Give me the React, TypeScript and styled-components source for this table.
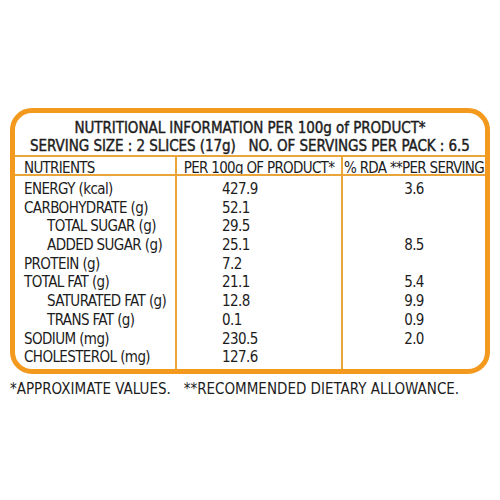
import React from "react";
import styled, { createGlobalStyle } from "styled-components";

const ORANGE = "#F39A1E";
const LINE = "#E9A43A";
const INK = "#1c1c1c";

const Global = createGlobalStyle`
  html, body { margin: 0; padding: 0; background: #fff; }
  body {
    font-family: "DejaVu Sans Condensed", "DejaVu Sans", sans-serif;
    font-stretch: condensed;
    color: ${INK};
  }
`;

const Page = styled.div`
  width: 500px;
  height: 500px;
  box-sizing: border-box;
  padding: 108px 10px 0 10px;
`;

const Panel = styled.div`
  width: 480px;
  height: 266px;
  box-sizing: border-box;
  border: 5px solid ${ORANGE};
  border-radius: 22px;
  overflow: hidden;
  display: flex;
  flex-direction: column;
`;

const Title = styled.div`
  text-align: center;
  font-size: 15px;
  font-weight: 400;
  -webkit-text-stroke: 0.4px ${INK};
  line-height: 18px;
  letter-spacing: -0.05px;
  padding-top: 6px;
  height: 42px;
  box-sizing: border-box;
  white-space: nowrap;
`;

const Table = styled.div`
  flex: 1;
  display: grid;
  grid-template-columns: 160px 166px 1fr;
  grid-template-rows: 19px 1fr;
  border-top: 2px solid ${LINE};
`;

const Col = styled.div<{ $divider?: boolean; $align: "left" | "value" | "center" }>`
  display: flex;
  flex-direction: column;
  border-left: ${(p) => (p.$divider ? `2px solid ${LINE}` : "none")};
  padding-top: 4px;
  align-items: ${(p) => (p.$align === "center" ? "center" : "flex-start")};
  padding-left: ${(p) => (p.$align === "value" ? "45px" : p.$align === "left" ? "9px" : "0")};
`;

const Head = styled.div<{ $divider?: boolean; $center?: boolean }>`
  border-left: ${(p) => (p.$divider ? `2px solid ${LINE}` : "none")};
  border-bottom: 2px solid ${LINE};
  font-size: 15px;
  line-height: 18px;
  padding-top: 2px;
  box-sizing: border-box;
  letter-spacing: -0.7px;
  white-space: nowrap;
  overflow: hidden;
  text-align: ${(p) => (p.$center ? "center" : "left")};
  padding-left: ${(p) => (p.$center ? "0" : "9px")};
`;

const Cell = styled.div<{ $indent?: boolean }>`
  font-size: 15px;
  line-height: 18.7px;
  height: 18.7px;
  letter-spacing: -0.6px;
  white-space: nowrap;
  padding-left: ${(p) => (p.$indent ? "23px" : "0")};
`;

const Footer = styled.div`
  font-size: 15px;
  letter-spacing: 0px;
  padding: 6px 0 0 0;
  white-space: pre;
`;

type Row = { name: string; indent?: boolean; per100: string; rda: string };

const rows: Row[] = [
  { name: "ENERGY (kcal)", per100: "427.9", rda: "3.6" },
  { name: "CARBOHYDRATE (g)", per100: "52.1", rda: "" },
  { name: "TOTAL SUGAR (g)", indent: true, per100: "29.5", rda: "" },
  { name: "ADDED SUGAR (g)", indent: true, per100: "25.1", rda: "8.5" },
  { name: "PROTEIN (g)", per100: "7.2", rda: "" },
  { name: "TOTAL FAT (g)", per100: "21.1", rda: "5.4" },
  { name: "SATURATED FAT (g)", indent: true, per100: "12.8", rda: "9.9" },
  { name: "TRANS FAT (g)", indent: true, per100: "0.1", rda: "0.9" },
  { name: "SODIUM (mg)", per100: "230.5", rda: "2.0" },
  { name: "CHOLESTEROL (mg)", per100: "127.6", rda: "" },
];

export default function App() {
  return (
    <>
      <Global />
      <Page>
        <Panel>
          <Title>
            <div>NUTRITIONAL INFORMATION PER 100g of PRODUCT*</div>
            <div>SERVING SIZE : 2 SLICES (17g)&nbsp;&nbsp; NO. OF SERVINGS PER PACK : 6.5</div>
          </Title>
          <Table>
            <Head>NUTRIENTS</Head>
            <Head $divider $center>PER 100g OF PRODUCT*</Head>
            <Head $divider $center>% RDA **PER SERVING</Head>
            <Col $align="left">
              {rows.map((r) => (
                <Cell key={r.name} $indent={r.indent}>{r.name}</Cell>
              ))}
            </Col>
            <Col $divider $align="value">
              {rows.map((r) => (
                <Cell key={r.name}>{r.per100}</Cell>
              ))}
            </Col>
            <Col $divider $align="center">
              {rows.map((r) => (
                <Cell key={r.name}>{r.rda}</Cell>
              ))}
            </Col>
          </Table>
        </Panel>
        <Footer>{"*APPROXIMATE VALUES.   **RECOMMENDED DIETARY ALLOWANCE."}</Footer>
      </Page>
    </>
  );
}
